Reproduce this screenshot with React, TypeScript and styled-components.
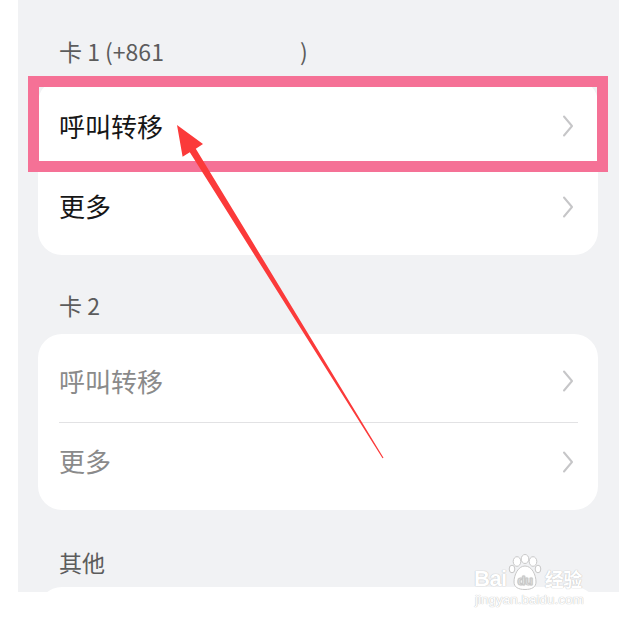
import React from "react";
import styled, { createGlobalStyle } from "styled-components";

const GlobalStyle = createGlobalStyle`
  html, body {
    margin: 0;
    padding: 0;
    background: #ffffff;
  }
  body {
    font-family: "Noto Sans CJK SC", "Noto Sans", sans-serif;
  }
`;

const Page = styled.div`
  position: relative;
  width: 619px;
  height: 622px;
  overflow: hidden;
  background: #ffffff;
`;

const Panel = styled.div`
  margin-left: 18px;
  width: 601px;
  height: 592px;
  box-sizing: border-box;
  padding: 0 21px 0 20px;
  background: #f1f2f4;
  overflow: hidden;
`;

const SectionHeader = styled.div<{ $top: number; $bottom?: number }>`
  padding: ${(p) => p.$top}px 0 ${(p) => p.$bottom ?? 13}px 21px;
  height: 28px;
  line-height: 26px;
  font-size: 23px;
  color: #5c5c5c;
  white-space: nowrap;
`;

const Gap = styled.span`
  display: inline-block;
  width: 136px;
`;

const Card = styled.div`
  background: #ffffff;
  border-radius: 24px;
  padding: 8px 0;
`;

const Row = styled.div<{ $muted?: boolean; $divider?: boolean }>`
  display: flex;
  align-items: center;
  justify-content: space-between;
  height: 80px;
  margin: 0 20px 0 21px;
  padding-bottom: 4px;
  box-sizing: border-box;
  border-top: ${(p) => (p.$divider ? "1px solid #e2e2e4" : "none")};
  font-size: 26px;
  color: ${(p) => (p.$muted ? "#8a8a8a" : "#161616")};
`;

const Chevron = () => (
  <svg width="12" height="22" viewBox="0 0 12 22" style={{ marginRight: 4, marginTop: 2 }}>
    <path
      d="M2 1.5 L10 11 L2 20.5"
      fill="none"
      stroke="#c6c6c8"
      strokeWidth="2"
      strokeLinecap="round"
      strokeLinejoin="round"
    />
  </svg>
);

const Highlight = styled.div`
  position: absolute;
  left: 28px;
  top: 76px;
  width: 580px;
  height: 96px;
  box-sizing: border-box;
  border: 11px solid #f57196;
`;

const ArrowLayer = styled.svg`
  position: absolute;
  left: 0;
  top: 0;
  pointer-events: none;
`;

const Watermark = styled.div`
  position: absolute;
  left: 474px;
  top: 553px;
  display: flex;
  flex-direction: column;
  align-items: flex-start;
  color: #ffffff;
  font-family: "Liberation Sans", Arial, sans-serif;
  text-shadow: 0 0 1px #c4c4c4, 0 0 1px #c4c4c4;
`;

const MarkTop = styled.div`
  display: flex;
  align-items: flex-end;
  height: 37px;
  font-size: 22px;
  font-weight: bold;
  line-height: 22px;
  letter-spacing: -0.5px;
`;

const MarkCn = styled.span`
  font-family: "Noto Sans CJK SC", sans-serif;
  font-size: 19px;
  line-height: 22px;
  font-weight: bold;
  margin-left: 2px;
`;

const MarkUrl = styled.div`
  font-size: 13.5px;
  line-height: 14px;
  margin-top: 3px;
  margin-left: 1px;
`;

const Paw = () => (
  <svg width="34" height="37" viewBox="0 0 34 37" style={{ margin: "0 1px -1px" }}>
    <g fill="#ffffff" stroke="#c8c8c8" strokeWidth="1">
      <ellipse cx="9" cy="7.5" rx="3.8" ry="4.8" />
      <ellipse cx="17" cy="5" rx="3.8" ry="4.5" />
      <ellipse cx="25" cy="7.5" rx="3.8" ry="4.8" />
      <ellipse cx="30" cy="15" rx="2.8" ry="3.8" />
      <ellipse cx="4" cy="15" rx="2.8" ry="3.8" />
      <path d="M17 12 C10 12 6 21 6 28 C6 33 10 35.5 17 35.5 C24 35.5 28 33 28 28 C28 21 24 12 17 12 Z" />
    </g>
    <text
      x="17"
      y="31"
      textAnchor="middle"
      fontSize="13"
      fontWeight="bold"
      fontFamily="Liberation Sans, sans-serif"
      fill="#ffffff"
      stroke="#c8c8c8"
      strokeWidth="0.6"
    >
      du
    </text>
  </svg>
);

export default function App() {
  return (
    <Page>
      <GlobalStyle />
      <Panel>
        <SectionHeader $top={38}>
          卡 1 (+861<Gap />)
        </SectionHeader>
        <Card>
          <Row>
            呼叫转移
            <Chevron />
          </Row>
          <Row $divider>
            更多
            <Chevron />
          </Row>
        </Card>

        <SectionHeader $top={37} $bottom={14}>
          卡 2
        </SectionHeader>
        <Card>
          <Row $muted>
            呼叫转移
            <Chevron />
          </Row>
          <Row $muted $divider>
            更多
            <Chevron />
          </Row>
        </Card>

        <SectionHeader $top={39} $bottom={10}>
          其他
        </SectionHeader>
        <Card>
          <Row>&nbsp;</Row>
        </Card>
      </Panel>

      <Highlight />

      <ArrowLayer width="619" height="622" viewBox="0 0 619 622">
        <polygon
          points="177,125 203,144 195.8,148.7 383.5,457.7 382.5,458.3 189.8,152.3 182.6,156.8"
          fill="#fb3a3a"
        />
      </ArrowLayer>

      <Watermark>
        <MarkTop>
          Bai
          <Paw />
          <MarkCn>经验</MarkCn>
        </MarkTop>
        <MarkUrl>jingyan.baidu.com</MarkUrl>
      </Watermark>
    </Page>
  );
}
